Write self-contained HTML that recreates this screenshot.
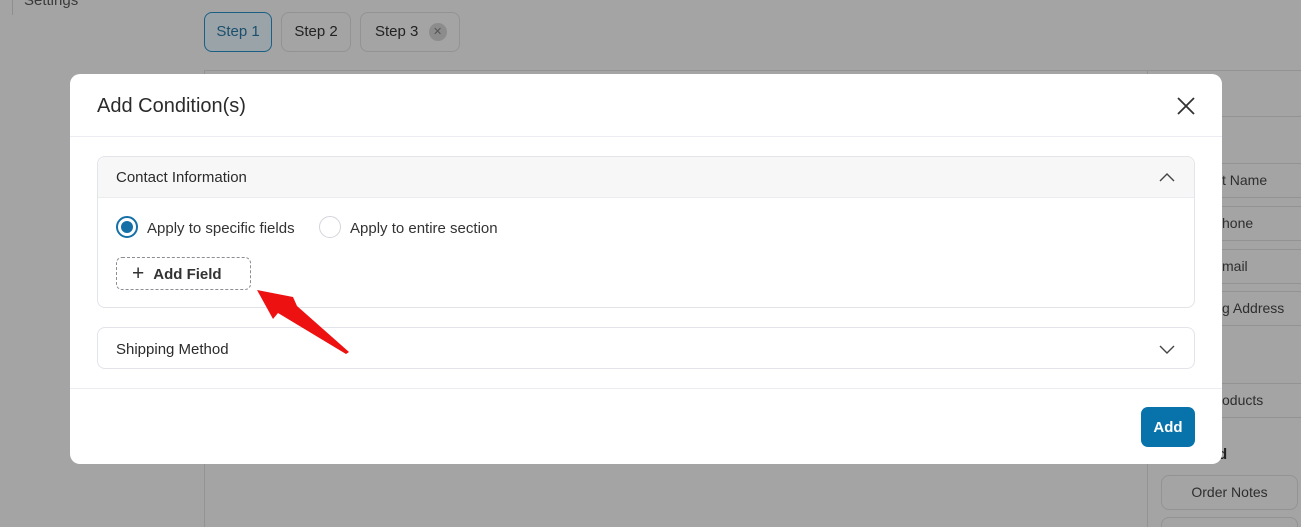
<!DOCTYPE html>
<html><head><meta charset="utf-8"><style>
*{box-sizing:border-box;margin:0;padding:0}
html,body{width:1301px;height:527px;overflow:hidden}
body{background:#a4a4a4;font-family:"Liberation Sans",sans-serif;position:relative;color:#222}
.abs{position:absolute}
.step{position:absolute;top:12px;height:40px;border:1px solid #939393;border-radius:8px;font-size:15px;line-height:38px;text-align:center;white-space:nowrap;color:#222}
.pill{position:absolute;left:1161px;width:150px;height:35px;border:1px solid #939393;border-radius:8px;font-size:14px;line-height:33px;color:#2e2e2e;white-space:nowrap}
.modal{position:absolute;left:70px;top:74px;width:1152px;height:390px;background:#fff;border-radius:10px;overflow:hidden}
.box{position:absolute;left:27px;width:1098px;border:1px solid #e3e3ea;border-radius:8px}
.radio{position:absolute;width:22px;height:22px;border-radius:50%;border:1.5px solid #d4d4dc}
</style></head><body>
<div class="abs" style="left:12px;top:0;width:1px;height:15px;background:#8e8e8e"></div>
<div class="abs" style="left:24px;top:-8px;font-size:15px;color:#3a3a3a">Settings</div>
<div class="step" style="left:204px;width:68px;border-color:#1b5f85;background:#9aa3a8;color:#1b4f6e">Step 1</div>
<div class="step" style="left:281px;width:70px">Step 2</div>
<div class="step" style="left:360px;width:100px;text-align:left;padding-left:14px">Step 3 <span style="display:inline-block;width:18px;height:18px;border-radius:50%;background:#8c8c8c;color:#555;font-size:11px;line-height:18px;text-align:center;margin-left:6px;vertical-align:1px">✕</span></div>
<div class="abs" style="left:204px;top:70px;width:1px;height:457px;background:#939393"></div>
<div class="abs" style="left:204px;top:70px;width:1097px;height:1px;background:#939393"></div>
<div class="abs" style="left:1147px;top:70px;width:1px;height:457px;background:#939393"></div>
<div class="abs" style="left:1147px;top:116px;width:154px;height:1px;background:#939393"></div>
<div class="pill" style="top:163px;padding-left:60px">t Name</div>
<div class="pill" style="top:206px;padding-left:60px">hone</div>
<div class="pill" style="top:249px;padding-left:60px">mail</div>
<div class="pill" style="top:291px;padding-left:60px">g Address</div>
<div class="pill" style="top:383px;padding-left:60px">oducts</div>
<div class="abs" style="left:1218px;top:446px;font-size:15px;font-weight:bold;color:#222">d</div>
<div class="pill" style="top:475px;text-align:center;width:137px">Order Notes</div>
<div class="pill" style="top:517px;width:137px;height:10px;border-bottom:none;border-radius:8px 8px 0 0"></div>

<div class="modal">
  <div class="abs" style="left:27px;top:21px;font-size:20px;color:#2b2b2b">Add Condition(s)</div>
  <svg class="abs" style="left:1106px;top:22px" width="20" height="20"><path d="M2 2L18 18M18 2L2 18" stroke="#333" stroke-width="1.8"/></svg>
  <div class="abs" style="left:0;top:62px;width:1152px;height:1px;background:#ececf2"></div>
  <div class="box" style="top:82px;height:152px">
    <div style="height:41px;background:#f7f7f7;border-bottom:1px solid #ececf0;border-radius:8px 8px 0 0;font-size:15px;line-height:42px;padding-left:18px;color:#2b2b2b">Contact Information</div>
    <svg class="abs" style="left:1060px;top:14px" width="18" height="12"><path d="M2 10L9 3L16 10" fill="none" stroke="#444" stroke-width="1.4"/></svg>
    <div class="radio" style="left:18px;top:59px;border:2px solid #1670a8"><div style="position:absolute;left:3px;top:3px;width:12px;height:12px;border-radius:50%;background:#1670a8"></div></div>
    <div class="abs" style="left:49px;top:63px;font-size:15px;color:#333">Apply to specific fields</div>
    <div class="radio" style="left:221px;top:59px"></div>
    <div class="abs" style="left:252px;top:63px;font-size:15px;color:#333">Apply to entire section</div>
    <div class="abs" style="left:18px;top:100px;width:135px;height:33px;border:1px dashed #8d8d95;border-radius:6px;font-size:15px;font-weight:bold;line-height:31px;color:#333;padding-left:15px;white-space:nowrap"><span style="font-weight:normal;font-size:21px;vertical-align:-1px;margin-right:9px">+</span>Add Field</div>
  </div>
  <div class="box" style="top:253px;height:42px;font-size:15px;line-height:43px;padding-left:18px;color:#2b2b2b">Shipping Method
    <svg class="abs" style="left:1060px;top:15px" width="18" height="12"><path d="M2 3L9 10L16 3" fill="none" stroke="#444" stroke-width="1.4"/></svg>
  </div>
  <div class="abs" style="left:0;top:314px;width:1152px;height:1px;background:#ececf2"></div>
  <div class="abs" style="left:1071px;top:333px;width:54px;height:40px;background:#0873ab;border-radius:7px;color:#fff;font-weight:bold;font-size:15px;line-height:41px;text-align:center">Add</div>
</div>
<svg class="abs" style="left:0;top:0" width="1301" height="527"><polygon points="257,290 293,297 297,306 349,352 346,354 278,313 273,319" fill="#ee1111"/></svg>
</body></html>
